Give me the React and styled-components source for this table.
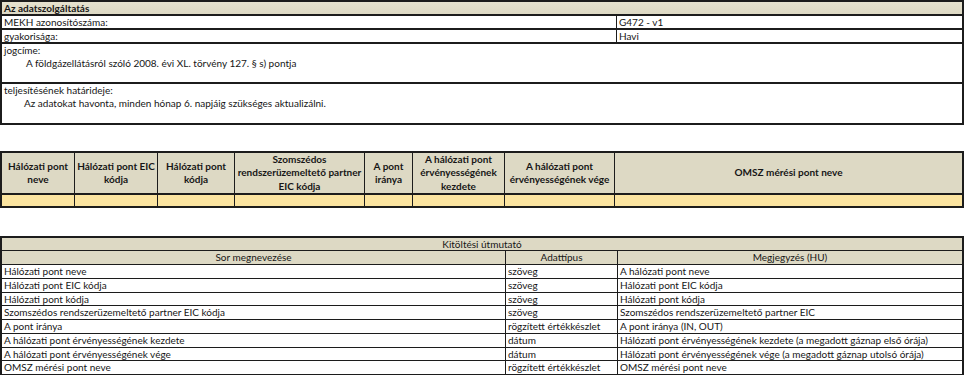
import React from 'react';
import styled, { createGlobalStyle } from 'styled-components';

const Global = createGlobalStyle`
  html, body { margin: 0; padding: 0; background: #ffffff; }
  body {
    font-family: Lato, "Open Sans", "Liberation Sans", sans-serif;
    font-size: 10px;
    color: #161616;
  }
`;

const LINE = '#1c1c1c';
const BEIGE = '#ddd9c4';
const YELLOW = '#fbe4a0';

const Sheet = styled.div`
  width: 964px;
  display: flex;
  flex-direction: column;
`;

/* ---------- top info block ---------- */
const InfoBlock = styled.section`
  border: 2px solid ${LINE};
  border-top-width: 2px;
`;

const InfoRow = styled.div`
  display: grid;
  grid-template-columns: ${(p) => (p.$split ? '614px 1fr' : '1fr')};
  height: ${(p) => p.$h}px;
  background: ${(p) => (p.$head ? `linear-gradient(#e6e2cf, ${BEIGE})` : '#fff')};
  border-bottom: 2px solid ${LINE};
  &:last-child { border-bottom: none; }
`;

const InfoCell = styled.div`
  padding: 0 2px;
  line-height: 12px;
  font-weight: ${(p) => (p.$bold ? 700 : 400)};
  border-left: ${(p) => (p.$divided ? `1px solid ${LINE}` : 'none')};
  white-space: nowrap;
  overflow: hidden;
`;

const Label = styled.div`
  line-height: 12px;
`;

const Indented = styled.div`
  padding-left: ${(p) => p.$indent}px;
  line-height: 13px;
  margin-top: 1px;
`;

/* ---------- entry table ---------- */
const EntryTable = styled.div`
  margin-top: 26px;
  border: 2px solid ${LINE};
  display: grid;
  grid-template-columns: 73px 83px 77px 130px 48px 92px 110px 1fr;
`;

const HeadCell = styled.div`
  height: 40px;
  background: ${BEIGE};
  border-right: 1px solid ${LINE};
  border-bottom: 2px solid ${LINE};
  display: flex;
  align-items: center;
  justify-content: center;
  text-align: center;
  font-weight: 700;
  line-height: 13.5px;
  white-space: nowrap;
  &:nth-child(8) { border-right: none; }
`;

const FillCell = styled.div`
  height: 11px;
  background: ${YELLOW};
  border-right: 1px solid ${LINE};
  &:last-child { border-right: none; }
`;

/* ---------- guide table ---------- */
const GuideTable = styled.div`
  margin-top: 28px;
  border: 2px solid ${LINE};
  border-bottom: none;
`;

const GuideTitle = styled.div`
  height: 12px;
  line-height: 12px;
  text-align: center;
  background: ${BEIGE};
  border-bottom: 1px solid ${LINE};
`;

const GuideRow = styled.div`
  display: grid;
  grid-template-columns: 503px 112px 1fr;
  height: ${(p) => p.$h}px;
  background: ${(p) => (p.$head ? BEIGE : '#fff')};
  border-bottom: 1px solid ${LINE};
`;

const GuideCell = styled.div`
  padding: 0 2px;
  line-height: ${(p) => p.$lh}px;
  text-align: ${(p) => (p.$center ? 'center' : 'left')};
  border-left: ${(p) => (p.$first ? 'none' : `1px solid ${LINE}`)};
  white-space: nowrap;
  overflow: hidden;
`;

const headers = [
  ['Hálózati pont', 'neve'],
  ['Hálózati pont EIC', 'kódja'],
  ['Hálózati pont', 'kódja'],
  ['Szomszédos', 'rendszerüzemeltető partner', 'EIC kódja'],
  ['A pont', 'iránya'],
  ['A hálózati pont', 'érvényességének', 'kezdete'],
  ['A hálózati pont', 'érvényességének vége'],
  ['OMSZ mérési pont neve'],
];

const guide = [
  ['Hálózati pont neve', 'szöveg', 'A hálózati pont neve'],
  ['Hálózati pont EIC kódja', 'szöveg', 'Hálózati pont EIC kódja'],
  ['Hálózati pont kódja', 'szöveg', 'Hálózati pont kódja'],
  ['Szomszédos rendszerüzemeltető partner EIC kódja', 'szöveg', 'Szomszédos rendszerüzemeltető partner EIC'],
  ['A pont iránya', 'rögzített értékkészlet', 'A pont iránya (IN, OUT)'],
  ['A hálózati pont érvényességének kezdete', 'dátum', 'Hálózati pont érvényességének kezdete (a megadott gáznap első órája)'],
  ['A hálózati pont érvényességének vége', 'dátum', 'Hálózati pont érvényességének vége (a megadott gáznap utolsó órája)'],
  ['OMSZ mérési pont neve', 'rögzített értékkészlet', 'OMSZ mérési pont neve'],
];

export default function App() {
  return (
    <>
      <Global />
      <Sheet>
        <InfoBlock>
          <InfoRow $h={12} $head>
            <InfoCell $bold>Az adatszolgáltatás</InfoCell>
          </InfoRow>
          <InfoRow $h={12} $split>
            <InfoCell>MEKH azonosítószáma:</InfoCell>
            <InfoCell $divided>G472 - v1</InfoCell>
          </InfoRow>
          <InfoRow $h={12} $split>
            <InfoCell>gyakorisága:</InfoCell>
            <InfoCell $divided>Havi</InfoCell>
          </InfoRow>
          <InfoRow $h={38}>
            <InfoCell>
              <Label>jogcíme:</Label>
              <Indented $indent={22}>
                A földgázellátásról szóló 2008. évi XL. törvény 127. § s) pontja
              </Indented>
            </InfoCell>
          </InfoRow>
          <InfoRow $h={39}>
            <InfoCell>
              <Label>teljesítésének határideje:</Label>
              <Indented $indent={20}>
                Az adatokat havonta, minden hónap 6. napjáig szükséges aktualizálni.
              </Indented>
            </InfoCell>
          </InfoRow>
        </InfoBlock>

        <EntryTable>
          {headers.map((lines, i) => (
            <HeadCell key={i}>
              <div>
                {lines.map((l, j) => (
                  <React.Fragment key={j}>
                    {j > 0 && <br />}
                    {l}
                  </React.Fragment>
                ))}
              </div>
            </HeadCell>
          ))}
          {headers.map((_, i) => (
            <FillCell key={`f${i}`} />
          ))}
        </EntryTable>

        <GuideTable>
          <GuideTitle>Kitöltési útmutató</GuideTitle>
          <GuideRow $h={13} $head>
            <GuideCell $first $center $lh={13}>Sor megnevezése</GuideCell>
            <GuideCell $center $lh={13}>Adattípus</GuideCell>
            <GuideCell $center $lh={13}>Megjegyzés (HU)</GuideCell>
          </GuideRow>
          {guide.map((r, i) => (
            <GuideRow key={i} $h={12.75}>
              <GuideCell $first $lh={12.75}>{r[0]}</GuideCell>
              <GuideCell $lh={12.75}>{r[1]}</GuideCell>
              <GuideCell $lh={12.75}>{r[2]}</GuideCell>
            </GuideRow>
          ))}
        </GuideTable>
      </Sheet>
    </>
  );
}
